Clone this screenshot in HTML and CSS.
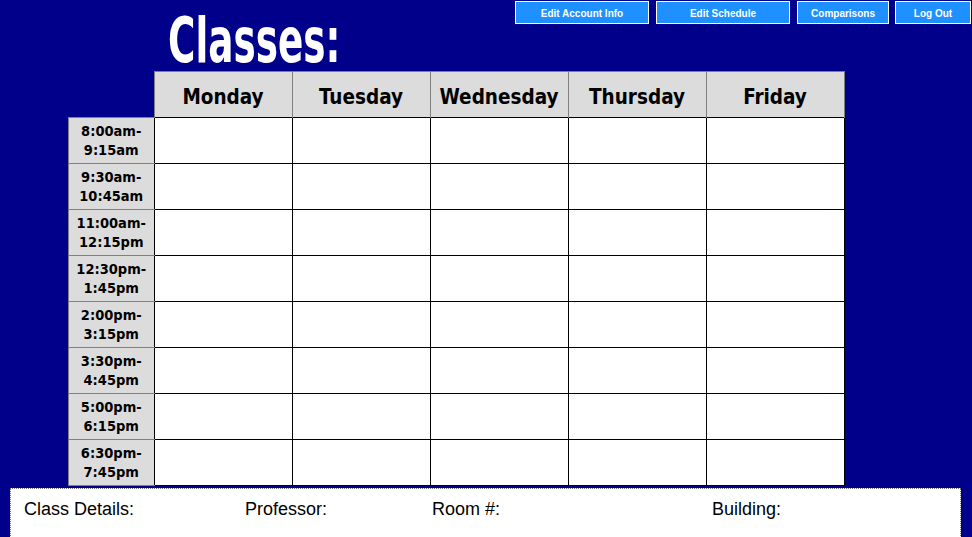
FILE: index.html
```html
<!DOCTYPE html>
<html lang="en">
<head>
    <meta charset="UTF-8">
    <meta name="viewport" content="width=device-width, initial-scale=1.0">
    <title>Classes</title>
    <link rel="stylesheet" href="styles.css">
</head>
<body>
    <div class="header">
        <h1><span>Classes:</span></h1>
        <div class="nav">
            <button class="wide">Edit Account Info</button>
            <button class="wide">Edit Schedule</button>
            <button class="mid">Comparisons</button>
            <button class="small">Log Out</button>
        </div>
    </div>

    <table class="schedule">
        <thead>
            <tr>
                <th class="corner"></th>
                <th>Monday</th>
                <th>Tuesday</th>
                <th>Wednesday</th>
                <th>Thursday</th>
                <th>Friday</th>
            </tr>
        </thead>
        <tbody>
            <tr><th class="time">8:00am-<br>9:15am</th><td></td><td></td><td></td><td></td><td></td></tr>
            <tr><th class="time">9:30am-<br>10:45am</th><td></td><td></td><td></td><td></td><td></td></tr>
            <tr><th class="time">11:00am-<br>12:15pm</th><td></td><td></td><td></td><td></td><td></td></tr>
            <tr><th class="time">12:30pm-<br>1:45pm</th><td></td><td></td><td></td><td></td><td></td></tr>
            <tr><th class="time">2:00pm-<br>3:15pm</th><td></td><td></td><td></td><td></td><td></td></tr>
            <tr><th class="time">3:30pm-<br>4:45pm</th><td></td><td></td><td></td><td></td><td></td></tr>
            <tr><th class="time">5:00pm-<br>6:15pm</th><td></td><td></td><td></td><td></td><td></td></tr>
            <tr><th class="time">6:30pm-<br>7:45pm</th><td></td><td></td><td></td><td></td><td></td></tr>
        </tbody>
    </table>

    <div class="details">
        <span class="detail d-class">Class Details:</span>
        <span class="detail d-prof">Professor:</span>
        <span class="detail d-room">Room #:</span>
        <span class="detail">Building:</span>
    </div>
</body>
</html>
```

FILE: styles.css
```css
body { margin: 0; background-color: #00008b; font-family: "DejaVu Sans Condensed", "DejaVu Sans", sans-serif; overflow: hidden; }

.header { display: flex; align-items: flex-start; height: 71px; }
h1 { margin: 0 0 0 168px; color: #fff; font-size: 62px; font-weight: bold; line-height: 1; padding-top: 10px; }
h1 span { display: inline-block; transform: scaleX(0.67); transform-origin: left; }

.nav { margin-left: auto; display: flex; gap: 7px; padding: 1px 1px 0 0; }
.nav button { height: 23px; background-color: #1e90ff; color: #fff; border: 1px solid #fff; font-family: "Liberation Sans", Arial, sans-serif; font-weight: bold; font-size: 10px; padding: 2px 0 0; cursor: pointer; }
.nav .wide { width: 134px; }
.nav .mid { width: 92px; margin-right: -1px; }
.nav .small { width: 76px; }

.schedule { margin-left: 68px; border-collapse: collapse; table-layout: fixed; }
.schedule th, .schedule td { padding: 0; height: 45px; }
.schedule thead th { width: 137px; height: 41px; padding-top: 4px; background-color: #dcdcdc; border: 1px solid #808080; border-bottom: none; font-size: 20.5px; color: #000; }
.schedule thead th.corner { width: 85px; background: none; border: none; }
.schedule td { background-color: #fff; border: 1px solid #000; }
.schedule th.time { background-color: #dcdcdc; border: 1px solid #808080; border-right: none; font-size: 14.5px; line-height: 19px; color: #000; }

.details { margin: 2px 11px 0 10px; height: 60px; background-color: #fff; border: 1px dotted #777; padding: 10px 0 0 13px; font-family: "Liberation Sans", Arial, sans-serif; font-size: 18px; display: flex; }
.detail { display: block; }
.d-class { width: 221px; }
.d-prof { width: 187px; }
.d-room { width: 280px; }
```
